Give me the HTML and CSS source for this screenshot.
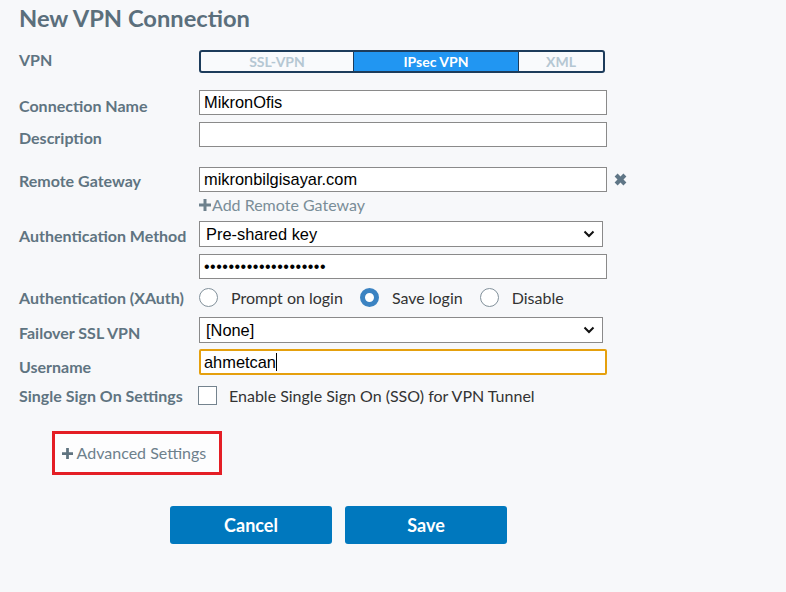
FILE: index.html
```html
<!DOCTYPE html>
<html lang="en">
<head>
    <meta charset="UTF-8">
    <title>New VPN Connection</title>
    <link rel="stylesheet" href="styles.css">
</head>
<body>
    <h1 class="title">New VPN Connection</h1>

    <div class="form">
        <div class="row row-vpn">
            <label class="label">VPN</label>
            <div class="segmented">
                <span class="seg seg-ssl">SSL-VPN</span>
                <span class="seg seg-ipsec active">IPsec VPN</span>
                <span class="seg seg-xml">XML</span>
            </div>
        </div>

        <div class="row row-name">
            <label class="label">Connection Name</label>
            <div class="field">MikronOfis</div>
        </div>

        <div class="row row-desc">
            <label class="label">Description</label>
            <div class="field"></div>
        </div>

        <div class="row row-gateway">
            <label class="label">Remote Gateway</label>
            <div class="field">mikronbilgisayar.com</div>
            <svg class="remove" width="15" height="15" viewBox="0 0 14 14">
                <path d="M1.5 4.3 4.3 1.5 7 4.2 9.7 1.5 12.5 4.3 9.8 7 12.5 9.7 9.7 12.5 7 9.8 4.3 12.5 1.5 9.7 4.2 7Z" fill="#5f7686"/>
            </svg>
        </div>

        <div class="row row-add">
            <span class="label"></span>
            <a class="add-link">
                <svg class="plus" width="12" height="12" viewBox="0 0 12 12"><path d="M4.5 0h3v4.5H12v3H7.5V12h-3V7.5H0v-3h4.5Z" fill="#6e818d"/></svg>Add Remote Gateway
            </a>
        </div>

        <div class="row row-auth">
            <label class="label">Authentication Method</label>
            <div class="field select">Pre-shared key
                <svg class="chevron" width="12" height="8" viewBox="0 0 12 8"><path d="M1.5 1.5 6 6 10.5 1.5" fill="none" stroke="#111" stroke-width="2"/></svg>
            </div>
        </div>

        <div class="row row-pwd">
            <span class="label"></span>
            <div class="field dots">••••••••••••••••••••</div>
        </div>

        <div class="row row-xauth">
            <label class="label">Authentication (XAuth)</label>
            <div class="radios">
                <span class="radio"></span><span class="radio-text">Prompt on login</span>
                <span class="radio checked"></span><span class="radio-text">Save login</span>
                <span class="radio"></span><span class="radio-text">Disable</span>
            </div>
        </div>

        <div class="row row-failover">
            <label class="label">Failover SSL VPN</label>
            <div class="field select">[None]
                <svg class="chevron" width="12" height="8" viewBox="0 0 12 8"><path d="M1.5 1.5 6 6 10.5 1.5" fill="none" stroke="#111" stroke-width="2"/></svg>
            </div>
        </div>

        <div class="row row-user">
            <label class="label">Username</label>
            <div class="field focused">ahmetcan<span class="caret"></span></div>
        </div>

        <div class="row row-sso">
            <label class="label">Single Sign On Settings</label>
            <span class="checkbox"></span>
            <span class="check-text">Enable Single Sign On (SSO) for VPN Tunnel</span>
        </div>
    </div>

    <div class="advanced">
        <svg class="plus" width="11" height="11" viewBox="0 0 12 12"><path d="M4.5 0h3v4.5H12v3H7.5V12h-3V7.5H0v-3h4.5Z" fill="#5f7380"/></svg> Advanced Settings
    </div>

    <div class="buttons">
        <button class="btn">Cancel</button>
        <button class="btn">Save</button>
    </div>
</body>
</html>
```

FILE: styles.css
```css
* {
    box-sizing: border-box;
}

body {
    margin: 0;
    padding: 0 19px;
    background-color: #f7f8fa;
    font-family: Lato, 'Noto Sans', sans-serif;
    width: 786px;
    height: 592px;
    overflow: hidden;
}

.title {
    margin: 4px 0 0;
    font-size: 23.7px;
    line-height: 29px;
    font-weight: 700;
    color: #5b6f7c;
}

.row {
    display: flex;
    align-items: center;
}

.label {
    flex: 0 0 180px;
    font-size: 16px;
    font-weight: 700;
    color: #5f7481;
    padding-top: 6px;
}

.row-vpn { margin-top: 17px; height: 23px; }
.row-vpn .label { padding-top: 0; margin-top: -4px; }
.row-name { margin-top: 17px; }
.row-desc { margin-top: 7px; }
.row-gateway { margin-top: 20px; }
.row-gateway .label { padding-top: 2px; }
.row-add { margin-top: 3px; height: 18px; }
.row-auth { margin-top: 8px; }
.row-auth .label { padding-top: 2px; }
.row-pwd { margin-top: 7px; }
.row-xauth { margin-top: 8px; height: 20px; }
.row-xauth .label { padding-top: 0; }
.row-failover { margin-top: 10px; }
.row-failover .label { padding-top: 4px; }
.row-user { margin-top: 5px; }
.row-user .label { padding-top: 9px; }
.row-sso { margin-top: 10px; height: 18px; }
.row-sso .label { padding-top: 0; }

.segmented {
    display: flex;
    width: 406px;
    height: 23px;
    border: 2px solid #1d3c5b;
    border-radius: 3px;
    background-color: #f9fafc;
    overflow: hidden;
}

.seg {
    display: flex;
    align-items: center;
    justify-content: center;
    font-size: 14px;
    font-weight: 700;
    color: #b5c7d3;
}

.seg-ssl { width: 153px; border-right: 1px solid #1d3c5b; }
.seg-ipsec { width: 165px; border-right: 1px solid #1d3c5b; }
.seg-xml { flex: 1; }

.seg.active {
    background-color: #2196f2;
    color: #fff;
}

.field {
    position: relative;
    width: 408px;
    height: 25px;
    border: 1px solid #8a8a8a;
    background-color: #fff;
    font-family: 'Liberation Sans', Arial, sans-serif;
    font-size: 16.4px;
    line-height: 23px;
    padding: 0 4px;
    color: #000;
}

.field.select {
    width: 404px;
    height: 26px;
    line-height: 24px;
    padding-left: 6px;
}

.chevron {
    position: absolute;
    right: 7px;
    top: 8px;
}

.field.dots {
    font-size: 16px;
    letter-spacing: 0.5px;
}

.field.focused {
    border: 2px solid #e5a00d;
    border-radius: 2px;
    height: 26px;
    line-height: 22px;
    padding-left: 3px;
}

.caret {
    display: inline-block;
    width: 1.5px;
    height: 18px;
    background-color: #000;
    vertical-align: -3px;
}

.remove {
    margin-left: 6px;
}

.add-link {
    font-size: 16px;
    color: #7a8d98;
}

.add-link .plus {
    margin-right: 1px;
}

.radios {
    display: flex;
    align-items: center;
}

.radio {
    width: 19px;
    height: 19px;
    border: 1.5px solid #82919b;
    border-radius: 50%;
    background-color: #fff;
}

.radio.checked {
    border: 5px solid #3b83c2;
}

.radio-text {
    font-size: 16px;
    color: #333;
    margin: 0 17px 0 13px;
}

.checkbox {
    width: 19px;
    height: 19px;
    border: 1px solid #74838e;
    background-color: #fff;
    margin-left: -1px;
}

.check-text {
    font-size: 16px;
    color: #333;
    margin-left: 12px;
}

.advanced {
    margin: 27px 0 0 33px;
    width: 170px;
    height: 44px;
    border: 3px solid #e41e25;
    background-color: #fdfdfe;
    font-size: 16px;
    color: #6e808c;
    padding: 9px 0 0 7px;
}

.buttons {
    display: flex;
    gap: 13px;
    margin: 31px 0 0 151px;
}

.btn {
    width: 162px;
    height: 38px;
    border: none;
    border-radius: 3px;
    background-color: #0078be;
    color: #fff;
    font-family: Lato, sans-serif;
    font-size: 18px;
    font-weight: 700;
}
```
